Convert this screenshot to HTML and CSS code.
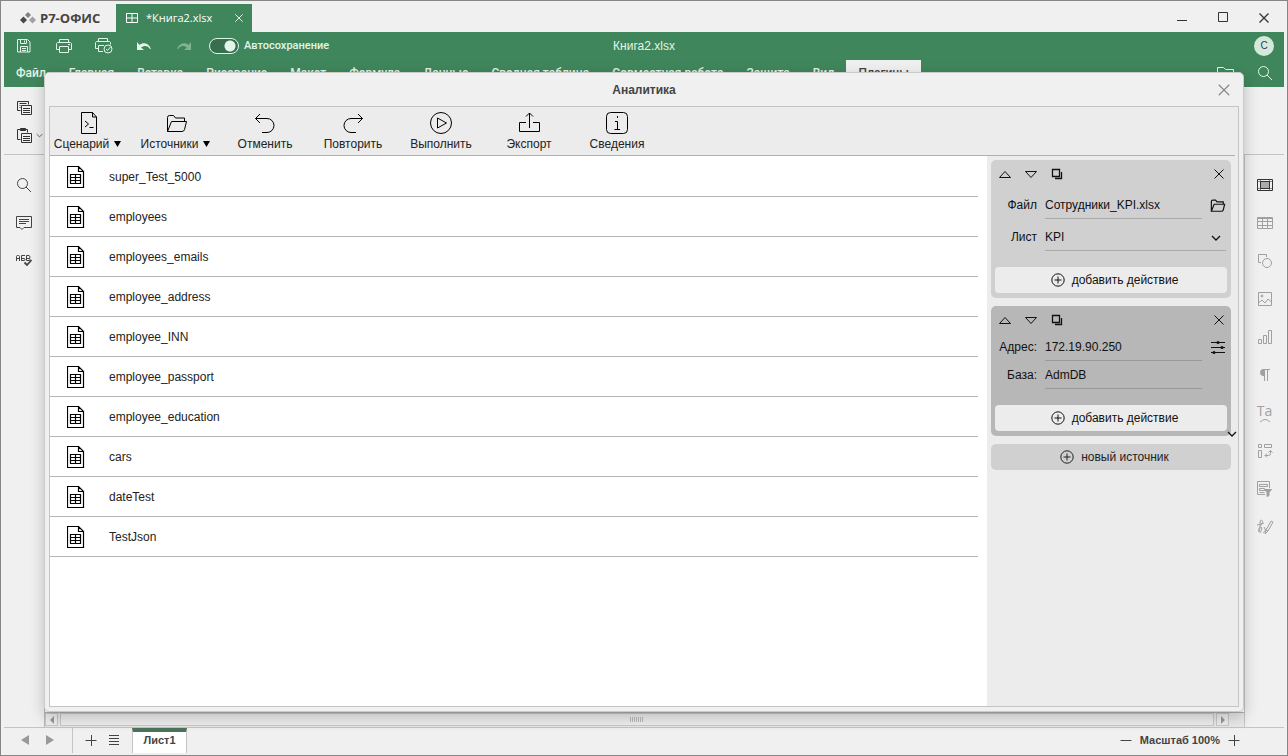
FILE: index.html
```html
<!DOCTYPE html>
<html lang="ru">
<head>
<meta charset="utf-8">
<title>Книга2.xlsx</title>
<link rel="stylesheet" href="styles.css">
</head>
<body>
<svg class="defs" aria-hidden="true">
  <symbol id="sheet" viewBox="0 0 18 22"><path d="M.5.5h11l5 5v16H.5zM11.500.5v5h5M3.500 8.500h10v9h-10zM3.500 11.500h10M3.500 14.500h10M8.500 8.500v9"/></symbol>
  <symbol id="up" viewBox="0 0 12 12"><path d="M6 3.500l5.500 6H.5z"/></symbol>
  <symbol id="down" viewBox="0 0 12 12"><path d="M6 9.500L.5 3.500h11z"/></symbol>
  <symbol id="copy" viewBox="0 0 12 12"><path d="M1.500 1.500h7v7h-7zM10.500 4v6.500H4"/></symbol>
  <symbol id="cross" viewBox="0 0 12 12"><path d="M1.500 1.500l9 9M10.500 1.500l-9 9"/></symbol>
  <symbol id="plus" viewBox="0 0 14 14"><circle cx="7" cy="7" r="6.200"/><path d="M7 3.500v7M3.500 7h7"/></symbol>
  <symbol id="chev" viewBox="0 0 10 10"><path d="M1 3l4 4 4-4"/></symbol>
  <symbol id="folder" viewBox="0 0 22 20"><path d="M1.500 17.500v-14q0-2 2-2h4l2 2.500h9v3.500M1.500 17.500l4-10h15l-2 8q-.5 2-2.500 2z"/></symbol>
</svg>

<div class="app">
  <header class="titlebar">
    <div class="logo">
      <svg width="16" height="12" viewBox="0 0 16 12"><path fill="#808080" d="M8 0l3 3-3 3-3-3z"/><path fill="#484848" d="M3.500 4.500L7 8l-3.500 3.500L0 8z"/><path fill="#a0a0a0" d="M12.500 4.500L16 8l-3.500 3.500L9 8z"/></svg>
      <span>Р7-ОФИС</span>
    </div>
    <div class="doc-tab">
      <svg class="i" width="12" height="10" viewBox="0 0 12 10"><path d="M.5.5h11v9H.5zM.5 5h11M6 .5v9"/></svg>
      <span>*Книга2.xlsx</span>
      <button class="plain" aria-label="Закрыть вкладку"><svg class="i" width="10" height="10"><use href="#cross"/></svg></button>
    </div>
    <div class="win-controls">
      <button class="plain" aria-label="Свернуть"><svg class="i" width="12" height="12"><path d="M1 8.500h10"/></svg></button>
      <button class="plain" aria-label="Развернуть"><svg class="i" width="12" height="12"><path d="M1.500.5h9v9h-9z"/></svg></button>
      <button class="plain" aria-label="Закрыть"><svg class="i thick" width="12" height="12"><use href="#cross"/></svg></button>
    </div>
  </header>

  <div class="ribbon">
    <div class="quick">
      <div class="quick-left">
        <button class="plain" aria-label="Сохранить"><svg class="i" width="14" height="14"><path d="M.5.5h10l2.500 2.500v10H.5zM3.500.5v4h6v-4M3.500 13V7.500h7V13M5 9.500h4M5 11.500h4M7.500 1.500v2"/></svg></button>
        <button class="plain" aria-label="Печать"><svg class="i" width="16" height="14"><path d="M3.500 3.500v-3h9v3M3.500 10.500h-3v-6l1-1h13l1 1v6h-3M3.500 7.500h9v6h-9zM12 5.500h2"/></svg></button>
        <button class="plain" aria-label="Быстрая печать"><svg class="i" width="18" height="16"><path d="M3.500 3.500v-3h9v3M3.500 10.500h-3v-6l1-1h13l1 1v2M9 7.500H3.500v6H8"/><circle cx="13" cy="11" r="4"/><path d="M11 11l1.500 1.500L15.500 9"/></svg></button>
        <button class="plain" aria-label="Отменить"><svg width="16" height="12"><path fill="currentColor" d="M1 2v8h7L5 7.500c3-2.500 7-2 9 1.500h1C13 3 7 2 3.500 5z"/></svg></button>
        <button class="plain faded" aria-label="Повторить"><svg width="16" height="12"><path fill="currentColor" d="M15 2v8H8l3-2.500C8 5 4 5.500 2 9H1c2-6 8-7 11.500-4z"/></svg></button>
        <label class="autosave"><input type="checkbox" checked>Автосохранение</label>
      </div>
      <div class="doc-name">Книга2.xlsx</div>
      <div class="quick-right"><button class="plain avatar">С</button></div>
    </div>
    <nav class="tabs">
      <button>Файл</button><button>Главная</button><button>Вставка</button><button>Рисование</button><button>Макет</button><button>Формула</button><button>Данные</button><button>Сводная таблица</button><button>Совместная работа</button><button>Защита</button><button>Вид</button><button class="active">Плагины</button>
      <div class="tabs-right">
        <button aria-label="Открыть расположение"><svg class="i" width="17" height="14"><path d="M.5 13.500V1.500h6l2 2h8v10z"/></svg></button>
        <button aria-label="Поиск"><svg class="i" width="16" height="16"><circle cx="6.500" cy="6.500" r="5"/><path d="M10 10l5 5"/></svg></button>
      </div>
    </nav>
  </div>

  <div class="toolstrip">
    <button class="plain" aria-label="Копировать"><svg class="i" width="15" height="14"><path d="M3.500 9.500h-3v-9h11v3M2.500 2.500h7M2.500 4.500h1M2.500 6.500h1M4.500 4.500h10v9h-10zM6 7.500h7M6 9.500h7M6 11.500h7"/></svg></button>
    <button class="plain paste" aria-label="Вставить"><svg class="i" width="15" height="15"><path d="M3.500 11.500h-3v-10h10v3M4.500 5.500h10v9h-10zM6 8.500h7M6 10.500h7M6 12.500h7"/><path fill="currentColor" d="M3.500.5h5v2h-5z"/></svg><svg class="i" width="7" height="7" viewBox="0 0 10 10"><use href="#chev"/></svg></button>
  </div>

  <div class="workspace">
    <aside class="rail left">
      <button class="plain" aria-label="Поиск"><svg class="i" width="16" height="16"><circle cx="6.500" cy="6.500" r="5"/><path d="M10 10l5 5"/></svg></button>
      <button class="plain" aria-label="Комментарии"><svg class="i" width="16" height="16"><path d="M.5 1.500h15v11H8l-2 2-2-2H.5zM3 4.500h10M3 6.500h10M3 8.500h7"/></svg></button>
      <button class="plain" aria-label="Орфография"><svg class="i" width="16" height="16"><path d="M.5 8V3.500q0-1 1-1h1q1 0 1 1V8M.5 5.500h3M9 2.500H5.500v5H8q1 0 1-1t-1-1H5.500M10.500 2.500v5H13q1 0 1-1t-1-1q1-.5 1-1.500t-1-1.500zM10.500 5.500H13"/><path stroke-width="1.800" d="M8.500 9.500l2.500 2.500 4.500-5"/></svg></button>
    </aside>
    <main class="grid-area">
      <div class="cells"></div>
      <div class="hscroll">
        <button aria-label="Влево"><svg width="6" height="8"><path d="M5 0v8L1 4z"/></svg></button>
        <div class="track"><i></i></div>
        <button aria-label="Вправо"><svg width="6" height="8"><path d="M1 0v8l4-4z"/></svg></button>
      </div>
    </main>
    <aside class="rail right">
      <button class="plain on" aria-label="Ячейка"><svg class="i" width="16" height="12"><path d="M.5.5h15v11H.5z"/><path opacity=".55" d="M1 2.500h14M1 9.500h14M3.500 1v10M12.500 1v10"/><path fill="#aaa" d="M3.500 2.500h9v7h-9z"/></svg></button>
      <button class="plain" aria-label="Таблица"><svg class="i" width="16" height="12"><path d="M.5.5h15v11H.5zM.5 1.500h15M.5 4.500h15M.5 8.500h15M5.500 1.500v10M10.500 1.500v10"/></svg></button>
      <button class="plain" aria-label="Фигура"><svg class="i" width="16" height="16"><path d="M4 9.500H1.500v-8h8V4"/><circle cx="10" cy="10" r="4.500"/></svg></button>
      <button class="plain" aria-label="Изображение"><svg class="i" width="14" height="14"><path d="M.5.500h13v13H.5zM.5 11l3.500-3 3 3 3-4 3.500 3"/><circle cx="4" cy="4" r="1"/></svg></button>
      <button class="plain" aria-label="Диаграмма"><svg class="i" width="14" height="14"><path d="M.5 9.500h3v4h-3zM5.500 5.500h3v8h-3zM10.500.5h3v13h-3z"/></svg></button>
      <button class="plain" aria-label="Абзац"><svg class="i" width="12" height="14"><path d="M5.500 13V1.500H11M8.500 13V1.500"/><path fill="currentColor" d="M5.500 1.500H4a2.500 3 0 0 0 0 6h1.500z"/></svg></button>
      <button class="plain ta" aria-label="Text Art"><span>Ta</span><svg class="i" width="12" height="5"><path d="M1 4q5-5 10 0"/></svg></button>
      <button class="plain" aria-label="Сводная таблица"><svg class="i" width="14" height="14"><path d="M.5.5h3v3h-3zM6.500.5h7v3h-7zM.5 6.500h3v7h-3zM12.500 6.500v3q0 2-2 2H7M10.500 8.500l2-2 2 2M9 9.500l-2 2 2 2"/></svg></button>
      <button class="plain" aria-label="Срез"><svg class="i" width="16" height="16"><path d="M8 13.500H.5V.5h12V7M2.500 3.500h8v2h-8zM2.500 7.500h5v2h-5zM2.500 11.500h5"/><path fill="currentColor" d="M7.500 8.500h7l-2.500 3v3l-2 1v-4z"/></svg></button>
      <button class="plain" aria-label="Подпись"><svg class="i" width="18" height="16"><path d="M1 6l4-1 3-1M5.500 1C3 .5 5 7 3 13M5.500 1c3 2-2 5 0 6M3 13q-1-5 2-5 2 1-1 6M7 14q4-2 1-6M9 15l1-4 5-9 2 1-5 9zM10 11l2 1"/></svg></button>
    </aside>
  </div>

  <footer class="statusbar">
    <div class="sheet-nav">
      <button class="plain" aria-label="Предыдущий лист"><svg width="8" height="10"><path d="M8 0v10L0 5z"/></svg></button>
      <button class="plain" aria-label="Следующий лист"><svg width="8" height="10"><path d="M0 0v10l8-5z"/></svg></button>
    </div>
    <div class="sheet-tools">
      <button class="plain" aria-label="Добавить лист"><svg class="i" width="12" height="12"><path d="M.5 5.500h11M6.500 0v11"/></svg></button>
      <button class="plain" aria-label="Список листов"><svg class="i" width="10" height="12"><path d="M0 .5h10M0 3.500h10M0 6.500h10M0 9.500h10"/></svg></button>
    </div>
    <button class="sheet-tab">Лист1</button>
    <div class="zoom">
      <button class="plain" aria-label="Уменьшить"><svg class="i" width="12" height="12"><path d="M.5 6.500h11"/></svg></button>
      <span>Масштаб 100%</span>
      <button class="plain" aria-label="Увеличить"><svg class="i" width="12" height="12"><path d="M.5 6.500h11M6.500 1v11"/></svg></button>
    </div>
  </footer>

  <section class="dialog" role="dialog" aria-labelledby="dlg-title">
    <div class="dialog-head">
      <h1 id="dlg-title">Аналитика</h1>
      <button class="plain" aria-label="Закрыть"><svg class="i" width="14" height="14"><use href="#cross"/></svg></button>
    </div>
    <div class="frame">
      <div class="actions">
        <button><svg class="i" width="18" height="24"><path d="M1.500.5h11l4 4.500v16.500h-15zM12.500.5V5h4M5 9l3.500 3L5 15M9.500 15.500h4"/></svg><span class="menu">Сценарий <svg width="7" height="6"><path d="M0 0h7L3.500 6z"/></svg></span></button>
        <button><svg class="i" width="22" height="20"><use href="#folder"/></svg><span class="menu">Источники <svg width="7" height="6"><path d="M0 0h7L3.500 6z"/></svg></span></button>
        <button><svg class="i" width="22" height="22"><path d="M6 1L1.500 5.500 6 10M1.500 5.500H13a7 7 0 0 1 0 14H8"/></svg><span>Отменить</span></button>
        <button><svg class="i" width="22" height="22"><path d="M16 1l4.500 4.500L16 10M20.500 5.500H9a7 7 0 0 0 0 14h5"/></svg><span>Повторить</span></button>
        <button><svg class="i" width="24" height="24"><circle cx="12" cy="11" r="10.500"/><path d="M8.500 6v10l9-5z"/></svg><span>Выполнить</span></button>
        <button><svg class="i" width="24" height="24"><path d="M9 10.500H2.500v9h20v-9H16M12.500 16V1M9 4.500L12.500 1 16 4.500"/></svg><span>Экспорт</span></button>
        <button><svg class="i" width="24" height="24"><rect x="1.500" y=".5" width="21" height="21" rx="4"/><path d="M12.500 4v2M10 9.500h2.500v8M9.500 17.500h5.500"/></svg><span>Сведения</span></button>
      </div>
      <div class="panes">
        <ul class="tables">
          <li><svg class="i" width="18" height="22"><use href="#sheet"/></svg>super_Test_5000</li>
          <li><svg class="i" width="18" height="22"><use href="#sheet"/></svg>employees</li>
          <li><svg class="i" width="18" height="22"><use href="#sheet"/></svg>employees_emails</li>
          <li><svg class="i" width="18" height="22"><use href="#sheet"/></svg>employee_address</li>
          <li><svg class="i" width="18" height="22"><use href="#sheet"/></svg>employee_INN</li>
          <li><svg class="i" width="18" height="22"><use href="#sheet"/></svg>employee_passport</li>
          <li><svg class="i" width="18" height="22"><use href="#sheet"/></svg>employee_education</li>
          <li><svg class="i" width="18" height="22"><use href="#sheet"/></svg>cars</li>
          <li><svg class="i" width="18" height="22"><use href="#sheet"/></svg>dateTest</li>
          <li><svg class="i" width="18" height="22"><use href="#sheet"/></svg>TestJson</li>
        </ul>
        <div class="sources">
          <div class="card">
            <div class="card-head">
              <button class="plain" aria-label="Выше"><svg class="i" width="12" height="12"><use href="#up"/></svg></button>
              <button class="plain" aria-label="Ниже"><svg class="i" width="12" height="12"><use href="#down"/></svg></button>
              <button class="plain" aria-label="Копировать"><svg class="i thick" width="12" height="12"><use href="#copy"/></svg></button>
              <button class="plain" aria-label="Удалить"><svg class="i" width="12" height="12"><use href="#cross"/></svg></button>
            </div>
            <div class="field"><label for="file">Файл</label><input id="file" type="text" value="Сотрудники_KPI.xlsx"><button class="plain" aria-label="Обзор"><svg class="i bold" width="16" height="14"><use href="#folder"/></svg></button></div>
            <div class="field wide"><label for="list">Лист</label><div class="select"><select id="list"><option>KPI</option></select><svg class="i thick" width="10" height="10"><use href="#chev"/></svg></div></div>
            <button class="add"><svg class="i" width="14" height="14"><use href="#plus"/></svg>добавить действие</button>
          </div>
          <div class="card selected">
            <div class="card-head">
              <button class="plain" aria-label="Выше"><svg class="i" width="12" height="12"><use href="#up"/></svg></button>
              <button class="plain" aria-label="Ниже"><svg class="i" width="12" height="12"><use href="#down"/></svg></button>
              <button class="plain" aria-label="Копировать"><svg class="i thick" width="12" height="12"><use href="#copy"/></svg></button>
              <button class="plain" aria-label="Удалить"><svg class="i" width="12" height="12"><use href="#cross"/></svg></button>
            </div>
            <div class="field"><label for="addr">Адрес:</label><input id="addr" type="text" value="172.19.90.250"><button class="plain" aria-label="Параметры"><svg class="i" width="14" height="14"><path d="M0 1.500h14M0 6.500h14M0 11.500h14"/><g fill="currentColor" stroke="none"><circle cx="7" cy="1.500" r="1.500"/><circle cx="11" cy="6.500" r="1.500"/><circle cx="3" cy="11.500" r="1.500"/></g></svg></button></div>
            <div class="field"><label for="base">База:</label><input id="base" type="text" value="AdmDB"></div>
            <button class="add"><svg class="i" width="14" height="14"><use href="#plus"/></svg>добавить действие</button>
            <svg class="i grip" width="10" height="10"><use href="#chev"/></svg>
          </div>
          <button class="new-source"><svg class="i" width="14" height="14"><use href="#plus"/></svg>новый источник</button>
        </div>
      </div>
    </div>
  </section>
</div>
</body>
</html>
```
FILE: styles.css
```css
* { box-sizing: border-box; }
body { margin: 0; font: 12px/16px "Liberation Sans", Arial, sans-serif; color: #222; background: #f0f0f0; }
button, input, select { font: inherit; color: inherit; margin: 0; padding: 0; border: 0; background: none; border-radius: 0; }
button { display: flex; align-items: center; justify-content: center; }
svg { display: block; flex: none; fill: currentColor; }
.i { fill: none; stroke: currentColor; stroke-width: 1; overflow: visible; }
.thick { stroke-width: 1.300; }
.bold { stroke-width: 1.700; }
.defs { position: absolute; width: 0; height: 0; }

.app { position: relative; display: flex; flex-direction: column; height: 100vh; min-height: 560px; padding: 3px 3px 0; border: 1px solid #868686; background: #f0f0f0; }

.titlebar { display: flex; height: 28px; flex: none; }
.logo { display: flex; align-items: center; gap: 4px; width: 112px; padding-left: 16px; font: bold 13px/20px "Open Sans", sans-serif; color: #444; white-space: nowrap; }
.doc-tab { display: flex; align-items: center; width: 136px; padding: 0 8px 0 10px; gap: 8px; color: #fff; background: #40865c; font: 11px/16px "Open Sans", sans-serif; }
.doc-tab button { margin-left: auto; }
.win-controls { display: flex; margin-left: auto; color: #333; }
.win-controls button { width: 41px; }

.ribbon { flex: none; background: #40865c; color: #e2f5e8; }
.quick { display: grid; grid-template-columns: 1fr auto 1fr; align-items: center; height: 28px; }
.quick-left { display: flex; align-items: center; }
.quick-left .plain { width: 40px; height: 28px; }
.quick-left .faded { opacity: .4; }
.autosave { display: flex; align-items: center; gap: 5px; margin-left: 5px; font: 500 11px/16px Roboto, sans-serif; }
.autosave input { appearance: none; width: 30px; height: 16px; margin: 0; border: 1px solid #e2f5e8; border-radius: 8px; background: radial-gradient(circle at 20px 7px, #e2f5e8 5px, #376f4e 6px); }
.quick-right { display: flex; justify-content: flex-end; padding-right: 10px; }
.avatar { width: 20px; height: 20px; border-radius: 50%; background: #d3eadb; color: #335; font-size: 10px; }
.tabs { display: flex; height: 27px; font: 500 12px/16px Roboto, sans-serif; }
.tabs button { padding: 0 11px 2px 12px; white-space: nowrap; }
.tabs .active { color: #444; background: #f0f0f0; padding: 0 12px 2px 13px; }
.tabs-right { display: flex; margin-left: auto; }

.toolstrip { display: flex; flex: none; flex-direction: column; align-items: flex-start; gap: 13px; height: 68px; padding: 14px 13px 0; border-bottom: 1px solid #c4c4c4; color: #333; }
.paste { gap: 4px; }

.workspace { display: flex; flex: 1; min-height: 0; }
.rail { display: flex; flex: none; flex-direction: column; width: 40px; padding-top: 11px; }
.rail button { height: 38px; }
.left { color: #444; }
.right { border-left: 1px solid #c4c4c4; color: #a0a0a0; }
.right .on { color: #333; }
.rail .ta { flex-direction: column; font: 14px/14px "Open Sans", sans-serif; }
.grid-area { display: flex; flex: 1; flex-direction: column; min-width: 0; border-left: 1px solid #b8b8b8; }
.cells { flex: 1; background: repeating-linear-gradient(90deg, #fff 0 63px, #aaa 63px 64px); border-bottom: 1px solid #b0b0b0; }
.hscroll { display: flex; flex: none; gap: 2px; height: 14px; padding: 0 15px 1px 0; background: #e8e8e8; }
.hscroll button, .track { border: 1px solid #c8c8c8; background: #eee; color: #999; }
.hscroll button { width: 13px; }
.track { display: flex; flex: 1; align-items: center; justify-content: center; }
.track i { width: 14px; height: 5px; background: repeating-linear-gradient(90deg, #bbb 0 1px, transparent 1px 2px); }

.statusbar { display: flex; flex: none; height: 28px; border-top: 1px solid #c4c4c4; font-size: 11px; font-weight: bold; color: #444; }
.sheet-nav { display: flex; gap: 17px; height: 25px; padding: 0 18px 1px 17px; border-right: 1px solid #c4c4c4; color: #999; }
.sheet-tools { display: flex; gap: 12px; height: 25px; padding: 0 13px 0 12px; }
.sheet-tab { width: 55px; height: 25px; padding-bottom: 5px; border: 1px solid #c4c4c4; border-top: 4px solid #4d735d; border-bottom: 0; background: #fff; }
.zoom { display: flex; align-items: center; gap: 8px; height: 24px; margin-left: auto; padding-right: 44px; }

.dialog { position: absolute; inset: 71px 43px 43px 43px; display: flex; flex-direction: column; padding: 0 4px 4px; border: 1px solid #cacaca; border-radius: 5px; background: #f0f0f0; box-shadow: 0 5px 15px rgba(0, 0, 0, .22); }
.dialog-head { display: grid; grid-template-columns: 1fr auto 1fr; align-items: center; height: 33px; flex: none; padding: 1px 8px 0; color: #888; }
.dialog-head h1 { grid-column: 2; margin: 0; font-size: 12px; line-height: 16px; color: #444; }
.dialog-head button { justify-self: end; }
.frame { display: flex; flex: 1; flex-direction: column; min-height: 0; border: 1px solid #c4c4c4; background: #ececec; }
.actions { display: flex; flex: none; gap: 10px; height: 49px; margin-right: 3px; border-bottom: 1px solid #b0b0b0; }
.actions button { display: grid; grid-template-rows: 24px 16px; justify-items: center; align-content: start; width: 78px; padding-top: 5px; white-space: nowrap; }
.actions svg { color: #000; }
.menu { display: flex; align-items: center; gap: 5px; padding-right: 3px; }
.panes { display: flex; flex: 1; min-height: 0; }
.tables { flex: 1; margin: 0; padding: 1px 9px 0 0; list-style: none; background: #fff; }
.tables li { display: flex; align-items: center; gap: 24px; height: 40px; padding: 1px 0 0 17px; border-bottom: 1px solid #b4b4b4; }
.tables .i { stroke-width: 1.200; color: #000; }

.sources { display: flex; flex: none; flex-direction: column; gap: 8px; width: 251px; padding: 4px 7px 4px 4px; }
.card { position: relative; display: grid; gap: 6px; padding: 0 4px 5px 0; border-radius: 5px; background: #d0d0d0; color: #111; }
.card-head { display: flex; gap: 14px; height: 27px; padding: 1px 2px 0 8px; }
.card-head button:last-child { margin-left: auto; }
.field { display: grid; grid-template-columns: 46px 1fr 16px; gap: 8px; align-items: center; padding-right: 1px; }
.field label { padding-bottom: 2px; text-align: right; }
.field button { padding-bottom: 1px; }
.wide { grid-template-columns: 46px 1fr; }
.field input, .field select { width: 100%; height: 26px; padding-bottom: 2px; border-bottom: 1px solid #aaa; appearance: none; }
.select { position: relative; }
.select svg { position: absolute; right: 5px; top: 8px; }
.add, .new-source { gap: 7px; height: 26px; padding-left: 7px; border-radius: 4px; background: #ececec; }
.add { margin: 10px 0 0 4px; }
.selected { gap: 2px; background: #b7b7b7; }
.selected .add { margin-top: 14px; }
.selected input { border-color: #999; }
.grip { position: absolute; right: -6px; bottom: -3px; stroke-width: 1.300; }
.new-source { border-radius: 5px; background: #d0d0d0; }
```
